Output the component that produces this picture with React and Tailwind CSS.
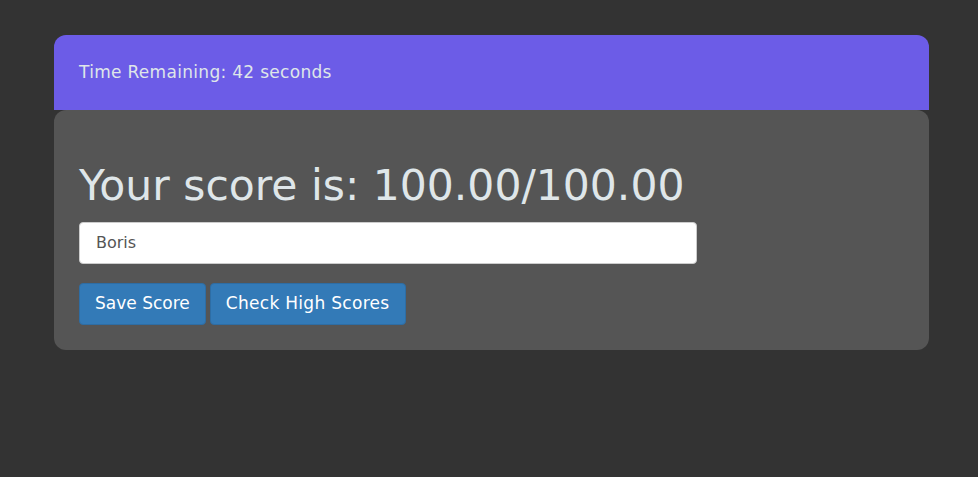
import React, { useState } from 'react';

export default function App() {
    const [name, setName] = useState('Boris');

    return (
        <div className="min-h-screen bg-[#333333] pt-[35px] px-[54px] font-['DejaVu_Sans',sans-serif]">
            {/* Timer header */}
            <div className="w-[875px] h-[75px] bg-[#6c5ce7] rounded-t-[12px] px-[25px] flex items-center">
                <p className="text-[17px] tracking-[0.3px] text-[#dfe6e9]">Time Remaining: 42 seconds</p>
            </div>

            {/* Score panel */}
            <div className="w-[875px] h-[240px] bg-[#555555] rounded-[12px] px-[25px] pt-[53px]">
                <h1 className="text-[42.5px] leading-[1.1] text-[#dfe6e9] font-normal">
                    Your score is: 100.00/100.00
                </h1>
                <input
                    type="text"
                    value={name}
                    onChange={(e) => setName(e.target.value)}
                    className="mt-[12px] block w-[618px] h-[42px] px-[16px] bg-white border border-[#cccccc] rounded-[4px] text-[16px] text-[#555555] outline-none"
                />
                <div className="mt-[19px] flex gap-[4px]">
                    <button className="h-[42px] px-[15px] bg-[#337ab7] border border-[#2e6da4] rounded-[4px] text-[17px] text-white">
                        Save Score
                    </button>
                    <button className="h-[42px] px-[15px] bg-[#337ab7] border border-[#2e6da4] rounded-[4px] text-[17px] tracking-[0.3px] text-white">
                        Check High Scores
                    </button>
                </div>
            </div>
        </div>
    );
}
